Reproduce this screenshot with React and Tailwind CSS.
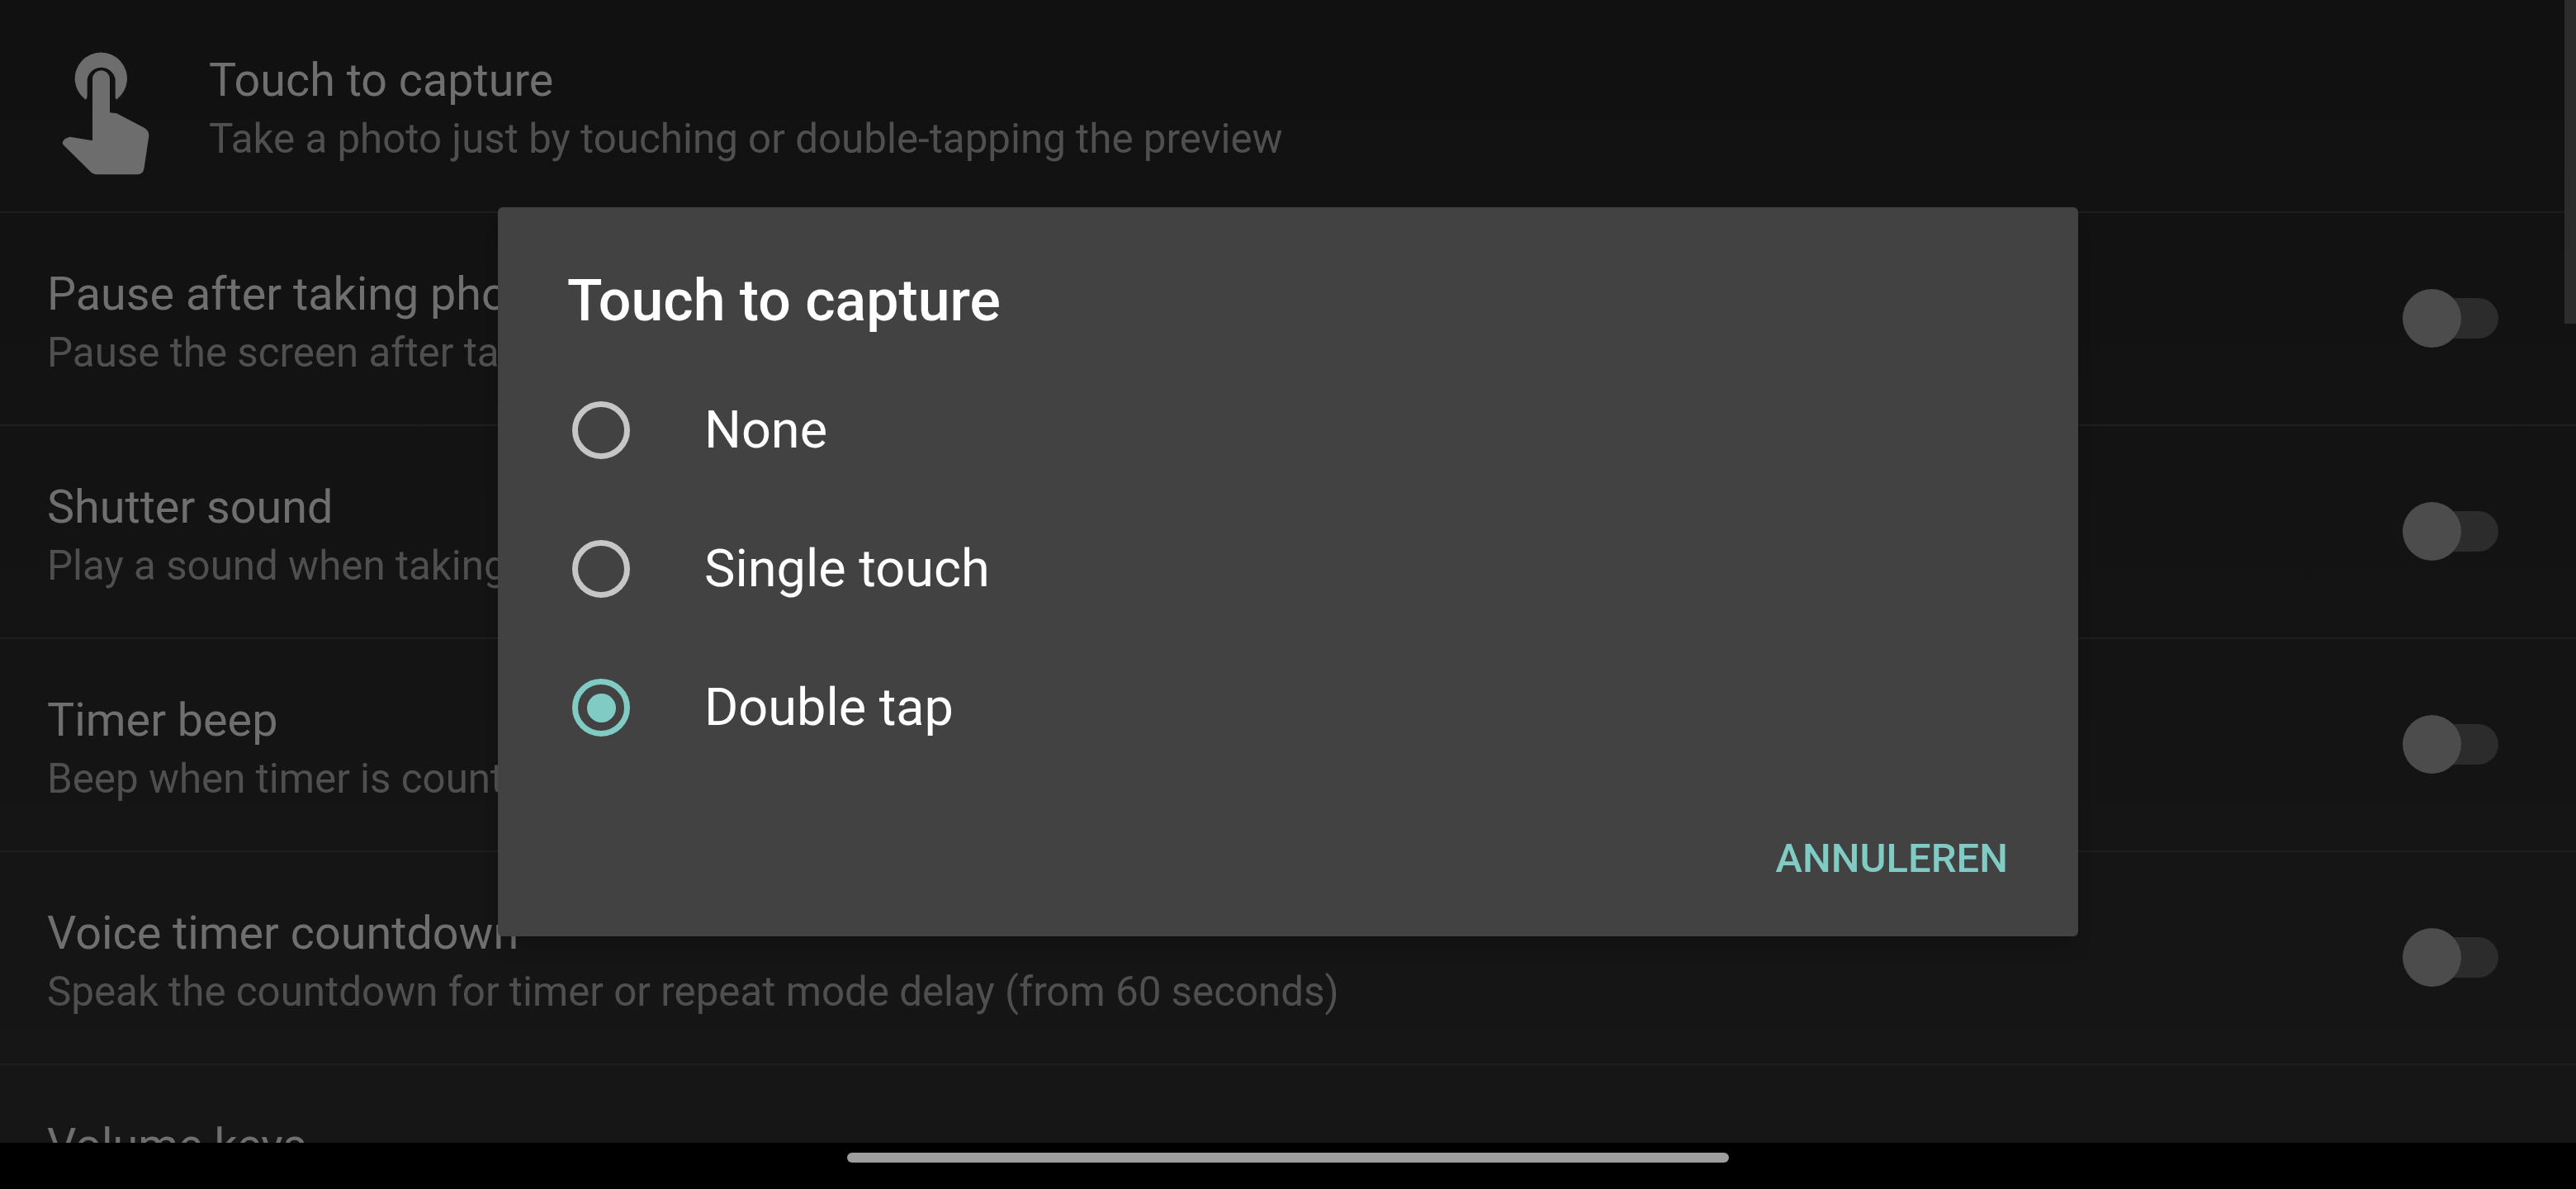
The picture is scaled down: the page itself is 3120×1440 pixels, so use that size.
const rows = [
  { title: 'Pause after taking photo', sub: 'Pause the screen after taking a photo, with options to share or delete' },
  { title: 'Shutter sound', sub: 'Play a sound when taking a photo' },
  { title: 'Timer beep', sub: 'Beep when timer is counting down' },
  { title: 'Voice timer countdown', sub: 'Speak the countdown for timer or repeat mode delay (from 60 seconds)' },
];

const options = [
  { label: 'None' },
  { label: 'Single touch' },
  { label: 'Double tap', checked: true },
];

const TouchIcon = () => (
  <svg viewBox="100 70 330 450" className="mt-[22px] h-[150px] w-[110px] shrink-0 fill-[#6d6d6d]">
    <path d="M192 243A95 95 0 1 1 304 243Q300 240 300 230L300 168A52 52 0 0 0 198 168L198 230Q198 238 192 243Z" />
    <path d="M217 168A31.5 31.5 0 0 1 280 168L280 290L305 293L405 345Q423 355 422 375L405 490Q402 515 380 515L235 515Q220 515 210 505L112 408Q102 398 118 385L135 378L217 392Z" />
  </svg>
);

const Toggle = () => (
  <div className="relative mb-[2px] h-[49px] w-[94px] shrink-0 rounded-full bg-[#2c2c2c]">
    <div className="absolute top-[-11px] left-[-22px] h-[71px] w-[71px] rounded-full bg-[#4c4c4c]" />
  </div>
);

const Radio = ({ checked }) => (
  <div
    className={`flex h-[70px] w-[70px] shrink-0 items-center justify-center rounded-full border-[7px] ${
      checked ? 'border-[#80cbc4]' : 'border-[#c6c6c6]'
    }`}
  >
    {checked && <div className="h-[35px] w-[35px] rounded-full bg-[#80cbc4]" />}
  </div>
);

const App = () => {
  return (
    <div className="relative flex h-[1440px] w-[3120px] flex-col overflow-hidden bg-black font-['Roboto',sans-serif]">
      <div className="relative flex-1 overflow-hidden bg-gradient-to-b from-[#111111] to-[#161616]">
        <div className="flex h-[258px] items-center gap-[70px] border-b-2 border-[#1e1e1e] pb-[2px] pl-[73px]">
          <TouchIcon />
          <div className="flex flex-col pt-[10px]">
            <div className="text-[55.7px] leading-[70px] text-[#6f6f6f]">Touch to capture</div>
            <div className="pt-[1px] text-[49.3px] leading-[70px] text-[#4f4f4f]">Take a photo just by touching or double-tapping the preview</div>
          </div>
        </div>

        {rows.map((row) => (
          <div key={row.title} className="flex h-[258px] items-center justify-between border-b-2 border-[#1e1e1e] pr-[94px] pl-[57px]">
            <div className="flex flex-col pt-[10px]">
              <div className="text-[55.7px] leading-[70px] text-[#6f6f6f]">{row.title}</div>
              <div className="pt-[1px] text-[49.3px] leading-[70px] text-[#4f4f4f]">{row.sub}</div>
            </div>
            <Toggle />
          </div>
        ))}

        <div className="pt-[62px] pl-[57px]">
          <div className="text-[55.7px] leading-[70px] text-[#6f6f6f]">Volume keys</div>
        </div>

        <div className="absolute top-0 right-0 h-[392px] w-[14px] bg-[#2c2c2c]" />
      </div>

      <div className="flex h-[56px] shrink-0 justify-center bg-black pt-[12px]">
        <div className="h-[12px] w-[1068px] rounded-full bg-[#9e9e9e]" />
      </div>

      <div className="absolute top-[251px] left-[603px] flex h-[883px] w-[1914px] flex-col rounded-[6px] bg-[#424242] shadow-xl">
        <div className="px-[84px] pt-[71px] text-[69.8px] leading-[84px] font-medium text-white">Touch to capture</div>
        <div className="mt-[31px] flex flex-col pl-[90px]">
          {options.map((opt) => (
            <div key={opt.label} className="flex h-[168px] items-center gap-[94px]">
              <Radio checked={opt.checked} />
              <span className="ml-[-4px] text-[63px] text-white">{opt.label}</span>
            </div>
          ))}
        </div>
        <div className="mt-auto flex justify-end pr-[85px] pb-[64px]">
          <span className="text-[49px] leading-[60px] font-medium text-[#80cbc4]">ANNULEREN</span>
        </div>
      </div>
    </div>
  );
};

export default App;
